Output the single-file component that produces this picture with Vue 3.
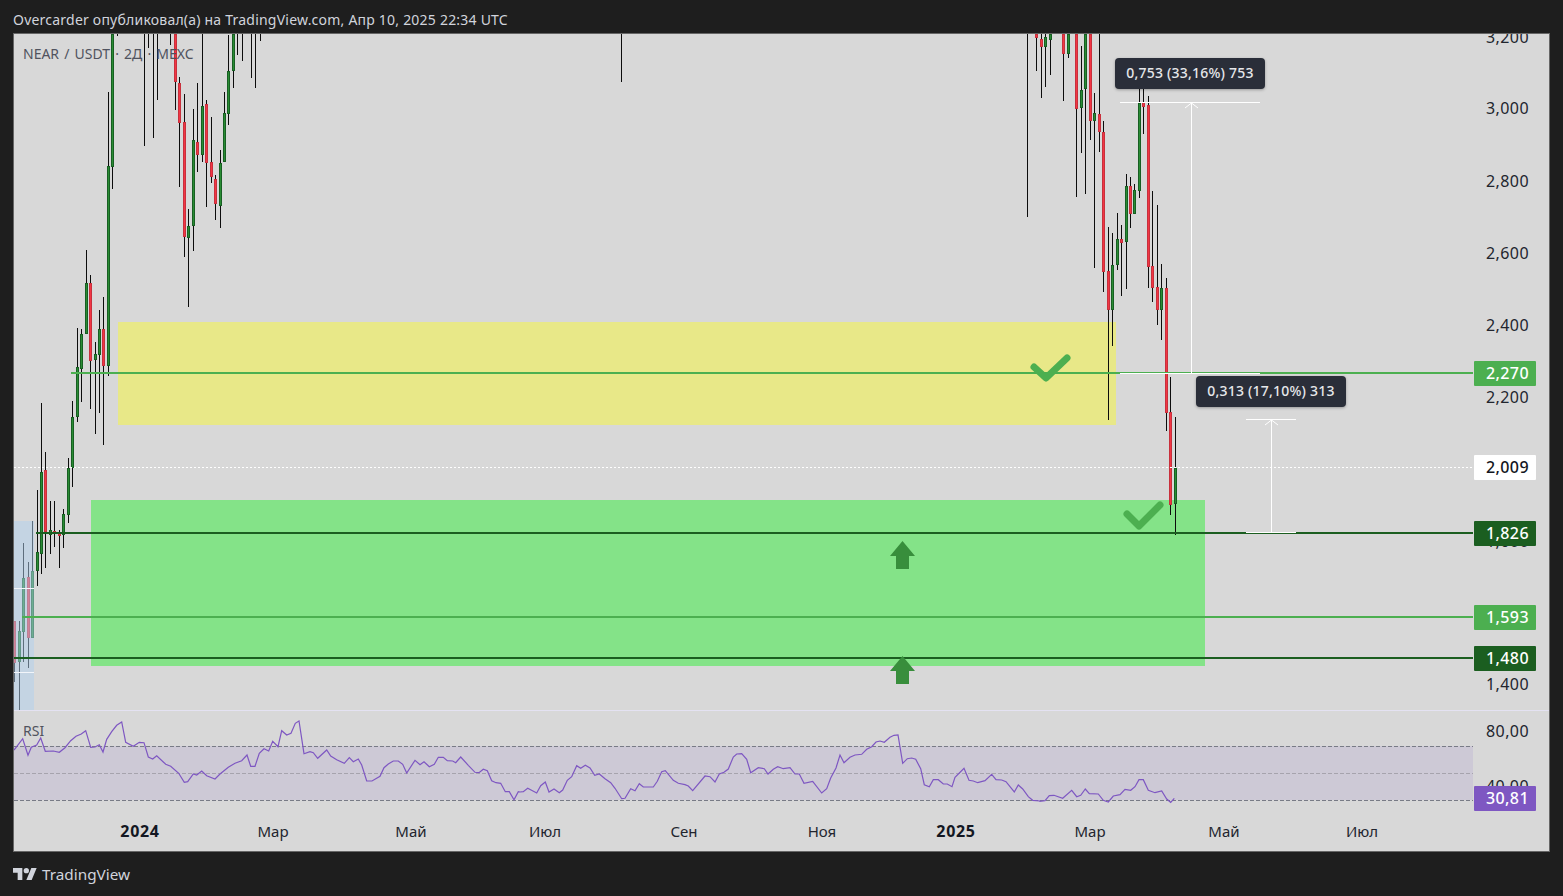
<template>
  <div class="page">
    <header class="top-bar">Overcarder опубликовал(а) на TradingView.com, Апр 10, 2025 22:34 UTC</header>

    <div class="chart-frame">
      <svg class="chart" viewBox="14 34 1535 817" width="1535" height="817">
        <!-- zones -->
        <rect x="118" y="322" width="998" height="103" fill="#e8e888" />
        <rect x="91" y="500" width="1114" height="166" fill="#84e388" />

        <!-- candles -->
        <g v-for="c in candles" :key="c[0]">
          <rect :x="c[0]" :y="c[1]" width="1" :height="c[2] - c[1]" fill="#0c0c0c" />
          <template v-if="c[5]">
            <rect :x="c[0] - 1" :y="c[3]" width="3" :height="c[4] - c[3]" :fill="c[5] === 'g' ? '#175f22' : '#c8303c'" />
            <rect :x="c[0]" :y="c[3] + 1" width="1" :height="Math.max(c[4] - c[3] - 2, 0)" :fill="c[5] === 'g' ? '#2a8c34' : '#f23645'" />
          </template>
        </g>

        <!-- blue range box sits over the first candles -->
        <rect x="14" y="521" width="20" height="189" fill="#b0cfee" fill-opacity="0.5" />
        <rect x="14" y="588" width="20" height="1" fill="#f2f5fa" />
        <rect x="14" y="672" width="20" height="1" fill="#f2f5fa" />

        <!-- level lines -->
        <rect x="71" y="372" width="1402" height="2" fill="#4caf50" />
        <rect x="36" y="532" width="1437" height="2" fill="#1b5e20" />
        <rect x="22" y="616" width="1451" height="2" fill="#4caf50" />
        <rect x="14" y="657" width="1459" height="2" fill="#1b5e20" />
        <line x1="14" y1="467.5" x2="1473" y2="467.5" stroke="#fff" stroke-dasharray="2 2" />

        <!-- checks and arrows -->
        <path d="M1034 367 L1046 378 L1067 358" class="check" />
        <path d="M1127 514 L1139 526 L1160 505" class="check" />
        <path d="M902.5 541 L915 556 H909 V569 H896 V556 H890 Z" fill="#388e3c" />
        <path d="M902.5 656 L915 671 H909 V684 H896 V671 H890 Z" fill="#388e3c" />

        <!-- measure tools -->
        <g class="measure">
          <path d="M1120 102.5 H1260 M1120 373.5 H1260 M1191.5 103 V373 M1185 108 L1191.5 103 L1198 108" />
          <path d="M1246 419.5 H1296 M1246 532.5 H1296 M1271.5 420 V532 M1265 425 L1271.5 420 L1278 425" />
        </g>

        <!-- rsi pane -->
        <rect x="14" y="710" width="1535" height="1" fill="#e4e2f2" />
        <rect x="14" y="746" width="1459" height="54" fill="#cdc9d6" />
        <line x1="14" y1="746.5" x2="1473" y2="746.5" class="dash" />
        <line x1="14" y1="773.5" x2="1473" y2="773.5" class="dash mid" />
        <line x1="14" y1="800.5" x2="1473" y2="800.5" class="dash" />
        <polyline :points="rsiPoints" class="rsi-line" />

        <!-- price axis -->
        <text v-for="t in priceTicks" :key="t.label" x="1507.5" :y="t.y" class="tick">{{ t.label }}</text>
        <g v-for="t in priceTags" :key="t.label">
          <rect x="1474" :y="t.y" width="62" height="25" rx="1" :fill="t.bg" />
          <text x="1507.5" :y="t.y + 12" class="tick tag" :class="{ light: t.light }">{{ t.label }}</text>
        </g>

        <!-- time axis -->
        <text
          v-for="t in timeTicks"
          :key="t.x"
          :x="t.x"
          y="830.5"
          class="tick time"
          :class="{ year: t.year }"
        >{{ t.label }}</text>
      </svg>

      <div class="legend">NEAR / USDT · 2Д · MEXC</div>
      <div class="legend rsi-title">RSI</div>
      <div class="tooltip first">0,753 (33,16%) 753</div>
      <div class="tooltip second">0,313 (17,10%) 313</div>
    </div>

    <footer class="bottom-bar">
      <svg class="logo" viewBox="0 4 36 18" width="24" height="12">
        <path d="M14 22H7V11H0V4h14v18zM28 22h-8l7.5-18h8L28 22z" fill="#d1d4dc" />
        <circle cx="20" cy="8" r="4" fill="#d1d4dc" />
      </svg>
      <span>TradingView</span>
    </footer>
  </div>
</template>

<script setup>
// [x, wickTop, wickBottom, bodyTop, bodyBottom, direction]
const candles = [
  [14, 621, 682, 621, 663, 'r'],
  [19, 621, 710, 631, 662, 'g'],
  [23, 543, 662, 578, 632, 'g'],
  [28, 562, 668, 577, 638, 'r'],
  [32, 521, 638, 571, 638, 'g'],
  [37, 490, 586, 552, 571, 'g'],
  [41, 403, 574, 472, 554, 'g'],
  [45, 452, 568, 470, 532, 'r'],
  [50, 501, 554, 530, 535, 'g'],
  [54, 501, 547, 531, 534, 'r'],
  [59, 530, 568, 533, 536, 'r'],
  [63, 509, 548, 514, 535, 'g'],
  [68, 458, 523, 468, 515, 'g'],
  [72, 401, 487, 417, 468, 'g'],
  [77, 328, 422, 367, 417, 'g'],
  [81, 329, 402, 334, 369, 'g'],
  [86, 250, 334, 283, 334, 'g'],
  [90, 275, 409, 283, 361, 'r'],
  [95, 342, 434, 354, 360, 'g'],
  [99, 310, 413, 329, 355, 'g'],
  [103, 297, 445, 329, 366, 'r'],
  [108, 92, 376, 166, 366, 'g'],
  [112, 34, 189, 34, 167, 'g'],
  [117, 34, 36],
  [144, 34, 146],
  [148, 34, 48],
  [153, 34, 138],
  [157, 34, 100],
  [170, 34, 45],
  [175, 34, 110, 34, 82, 'r'],
  [179, 77, 187, 83, 123, 'r'],
  [184, 94, 257, 122, 237, 'r'],
  [188, 209, 307, 226, 238, 'g'],
  [193, 109, 251, 140, 226, 'g'],
  [197, 83, 172, 142, 155, 'r'],
  [202, 34, 162, 106, 155, 'g'],
  [206, 100, 207, 104, 163, 'r'],
  [211, 117, 183, 162, 177, 'r'],
  [215, 175, 220, 179, 204, 'r'],
  [220, 150, 228, 163, 206, 'g'],
  [224, 92, 162, 113, 162, 'g'],
  [228, 35, 125, 71, 114, 'g'],
  [233, 34, 88, 34, 71, 'g'],
  [237, 34, 55],
  [242, 34, 61],
  [251, 34, 78],
  [255, 34, 88],
  [260, 34, 41],
  [621, 34, 82],
  [1027, 34, 217],
  [1036, 34, 71, 34, 38, 'r'],
  [1041, 34, 98, 39, 47, 'r'],
  [1045, 34, 87, 37, 47, 'g'],
  [1050, 34, 75, 34, 40, 'g'],
  [1063, 34, 101, 34, 54, 'r'],
  [1068, 34, 58, 34, 54, 'g'],
  [1076, 34, 197, 34, 109, 'r'],
  [1081, 46, 153, 90, 108, 'g'],
  [1085, 34, 194, 34, 89, 'g'],
  [1090, 34, 140, 34, 121, 'r'],
  [1094, 93, 268, 113, 121, 'g'],
  [1099, 34, 152, 114, 132, 'r'],
  [1103, 121, 292, 132, 272, 'r'],
  [1108, 227, 420, 271, 310, 'r'],
  [1112, 233, 346, 265, 310, 'g'],
  [1117, 213, 270, 239, 265, 'g'],
  [1121, 225, 296, 239, 243, 'r'],
  [1126, 174, 289, 186, 242, 'g'],
  [1130, 177, 228, 186, 214, 'r'],
  [1134, 184, 214, 190, 214, 'g'],
  [1139, 88, 198, 103, 191, 'g'],
  [1143, 88, 134, 102, 107, 'r'],
  [1148, 96, 288, 105, 267, 'r'],
  [1152, 191, 302, 266, 288, 'r'],
  [1157, 205, 325, 287, 310, 'r'],
  [1161, 264, 340, 288, 310, 'g'],
  [1166, 278, 431, 288, 413, 'r'],
  [1170, 377, 515, 412, 505, 'r'],
  [1175, 417, 535, 468, 504, 'g'],
]

// rsi traced in 3x crops, each chunk has its own left edge
const rsiChunks = [
  [0, [42,150,50,140,68,116,84,166,94,142,110,135,122,114,136,154,160,153,178,157,195,143,212,122,228,109,244,102,257,92,272,142,285,141,298,134,309,156,320,118,335,95,350,76,365,66,377,127,400,139,418,127,432,128,445,171,458,177,470,167,497,193,512,199,536,220,553,247,563,245,580,222,590,225,605,213,620,227,645,237,660,222,685,202,705,190,725,182,741,165,752,199,765,199,778,160,792,146,806,153,818,124,834,140,845,92,860,105,873,100,886,70,897,63,912,161,930,155,940,158,953,175,980,150,992,168,1010,179,1033,190,1048,173,1060,185,1075,177,1085,195,1100,243,1116,243,1140,229,1152,203,1165,192,1180,183,1195,183,1208,193,1220,219,1245,181,1260,194,1272,185,1288,200,1303,193,1315,172,1330,172,1342,182,1358,183,1367,188,1382,171,1405,196,1425,217,1437,218,1450,208,1462,212,1475,242,1488,248,1502,250,1516,275,1528,275,1542,299,1555,275]],
  [520, [0,276,10,275,23,265,50,279,62,257,76,246,87,276,102,267,118,278,128,270,142,241,155,230,170,197,182,205,196,196,210,204,224,226,238,222,255,236,272,248,285,265,305,296,315,295,332,266,345,272,358,251,370,261,400,261,412,244,425,215,436,212,460,241,475,250,495,254,505,258,518,272,555,228,570,230,585,246,598,222,612,217,625,207,640,171,650,162,665,161,680,178,692,218,715,203,733,206,744,222,760,208,773,200,790,206,810,203,825,222,838,222,852,250,878,244,905,279,920,266,932,234,948,204,960,165,972,188,990,172,1005,165,1025,163,1040,148,1055,140,1068,126,1080,123,1093,127,1110,112,1122,106,1134,105,1148,190,1162,176,1175,174,1187,178,1202,206,1213,254,1228,260,1240,239,1255,239,1270,252,1282,252,1296,260,1305,232,1332,205,1347,241,1360,243,1373,248,1395,242,1415,223,1428,239,1445,240,1458,245,1483,276,1495,255,1508,267,1525,290,1538,301,1560,303]],
  [1040, [0,304,15,302,28,287,42,286,68,295,95,271,110,290,122,286,136,267,148,281,175,282,190,301,205,306,220,288,240,284,255,268,272,271,285,260,297,239,310,239,325,271,345,278,365,273,380,297,392,307,403,295]],
]

const rsiPoints = rsiChunks
  .flatMap(([left, pts]) => {
    const out = []
    for (let i = 0; i < pts.length; i += 2) {
      out.push(`${(left + pts[i] / 3).toFixed(1)},${(700 + pts[i + 1] / 3).toFixed(1)}`)
    }
    return out
  })
  .join(' ')

const priceTicks = [
  { label: '3,200', y: 36.5 },
  { label: '3,000', y: 107.5 },
  { label: '2,800', y: 180.5 },
  { label: '2,600', y: 252.5 },
  { label: '2,400', y: 324.5 },
  { label: '2,200', y: 396.5 },
  { label: '1,600', y: 541 },
  { label: '1,400', y: 683.5 },
  { label: '80,00', y: 730.5 },
  { label: '40,00', y: 785.5 },
]

const priceTags = [
  { label: '2,270', y: 361, bg: '#4caf50', light: true },
  { label: '2,009', y: 455, bg: '#ffffff', light: false },
  { label: '1,826', y: 521, bg: '#1b5e20', light: true },
  { label: '1,593', y: 605, bg: '#4caf50', light: true },
  { label: '1,480', y: 646, bg: '#1b5e20', light: true },
  { label: '30,81', y: 786, bg: '#7e57c2', light: true },
]

const timeTicks = [
  { label: '2024', x: 140, year: true },
  { label: 'Мар', x: 273 },
  { label: 'Май', x: 411 },
  { label: 'Июл', x: 545 },
  { label: 'Сен', x: 684 },
  { label: 'Ноя', x: 822 },
  { label: '2025', x: 956, year: true },
  { label: 'Мар', x: 1090 },
  { label: 'Май', x: 1224 },
  { label: 'Июл', x: 1362 },
]
</script>

<style>
html,
body {
  margin: 0;
  background: #1e1e1e;
}
</style>

<style scoped>
.page {
  width: 1563px;
  height: 896px;
  display: flex;
  flex-direction: column;
  background: #1e1e1e;
  font-family: "Noto Sans", "Open Sans", sans-serif;
  overflow: hidden;
}

.top-bar {
  height: 33px;
  line-height: 40px;
  padding-left: 13px;
  font-size: 14px;
  letter-spacing: 0.22px;
  color: #d1d4dc;
  white-space: nowrap;
}

.chart-frame {
  position: relative;
  width: 1535px;
  height: 817px;
  margin-left: 13px;
  background: #d8d8d8;
  border: 1px solid #666;
}

.chart {
  display: block;
}

.check {
  fill: none;
  stroke: #4caf50;
  stroke-width: 7;
  stroke-linejoin: round;
  stroke-linecap: round;
}

.measure path {
  fill: none;
  stroke: #fff;
  stroke-width: 1;
}

.dash {
  stroke: #787b86;
  stroke-dasharray: 4 2;
}

.dash.mid {
  stroke: #a6a3ad;
}

.rsi-line {
  fill: none;
  stroke: #7e57c2;
  stroke-width: 1.2;
}

.tick {
  font-size: 16px;
  fill: #22252e;
  text-anchor: middle;
  dominant-baseline: central;
  letter-spacing: 0.4px;
}

.tick.tag {
  font-weight: 500;
  fill: #131722;
}

.tick.tag.light {
  fill: #ffffff;
}

.tick.time {
  font-size: 15px;
  letter-spacing: 0;
}

.tick.time.year {
  font-size: 16px;
  letter-spacing: 0.7px;
  font-weight: 700;
  fill: #131722;
}

.legend {
  position: absolute;
  left: 9px;
  top: 10px;
  font-size: 14px;
  line-height: 19px;
  word-spacing: 1.5px;
  color: #50535e;
}

.rsi-title {
  top: 687px;
}

.tooltip {
  position: absolute;
  width: 150px;
  height: 31px;
  line-height: 30px;
  text-align: center;
  font-size: 14px;
  font-weight: 500;
  letter-spacing: 0.2px;
  color: #e6e7ea;
  background: #2a2e39;
  border-radius: 4px;
  box-shadow: 0 1px 3px rgba(0, 0, 0, 0.3);
}

.tooltip.first {
  left: 1101px;
  top: 24px;
}

.tooltip.second {
  left: 1182px;
  top: 342px;
}

.bottom-bar {
  display: flex;
  align-items: center;
  gap: 5px;
  height: 44px;
  padding-left: 13px;
  font-size: 15.3px;
  color: #d1d4dc;
}
</style>
